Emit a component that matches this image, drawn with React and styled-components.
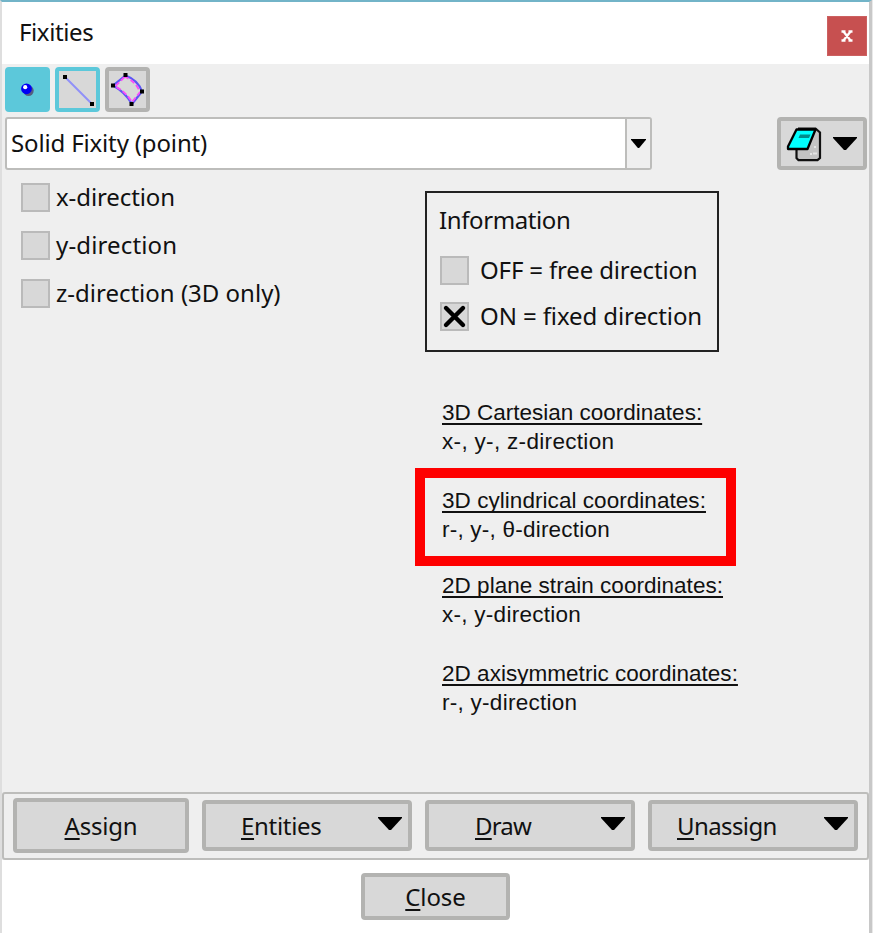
import React from "react";
import styled, { createGlobalStyle } from "styled-components";

const Global = createGlobalStyle`
  * { box-sizing: border-box; }
  body { margin: 0; background: #e9e9e9; overflow: hidden; }
  button { font: inherit; color: inherit; padding: 0; margin: 0; }
`;

const Window = styled.div`
  width: 872px;
  height: 933px;
  display: flex;
  flex-direction: column;
  border-left: 2px solid #dedede;
  border-right: 3px solid #c8c8c8;
  border-top: 2px solid #72b4c8;
  background: #efefef;
  font-family: "Noto Sans", sans-serif;
  font-size: 24px;
  line-height: 32px;
  color: #111;
`;

const TitleBar = styled.header`
  height: 62px;
  flex: none;
  display: flex;
  justify-content: space-between;
  align-items: flex-start;
  padding: 14px 2px 0 17px;
  background: #fff;
`;

const Text = styled.span`
  display: block;
  white-space: pre;
  letter-spacing: ${(p) => p.$track || 0}px;
`;

const CloseX = styled.button`
  width: 40px;
  height: 40px;
  border: 1px solid #cc6060;
  background: #c75050;
  display: grid;
  place-items: center;
`;

const ToolRow = styled.div`
  display: flex;
  flex: none;
  gap: 5px;
  padding: 3px 0 0 2.5px;
  height: 53px;
`;

const Tool = styled.button`
  width: 45px;
  height: 45px;
  border: 4px solid ${(p) => (p.$tone === "plain" ? "#b3b3b1" : "#5cc8da")};
  border-radius: 4px;
  background: ${(p) => (p.$tone === "active" ? "#5cc8da" : "#d8d8d8")};
  display: grid;
  place-items: center;
`;

const SelectRow = styled.div`
  display: flex;
  flex: none;
  justify-content: space-between;
  height: 53px;
  padding: 0 2px 0 3px;
`;

const Combo = styled.div`
  width: 647px;
  height: 53px;
  display: flex;
  border: 2px solid #bdbdbb;
  border-radius: 3px;
  background: #fff;
`;

const ComboValue = styled.div`
  flex: 1;
  padding: 8px 0 0 4px;
`;

const ComboArrow = styled.div`
  width: 25px;
  display: grid;
  place-items: center;
  border-left: 2px solid #bdbdbb;
  background: #efefef;
`;

const Button = styled.button`
  width: ${(p) => p.$w}px;
  height: ${(p) => p.$h}px;
  display: flex;
  align-items: center;
  justify-content: center;
  border: 4px solid #b3b3b1;
  border-radius: 4px;
  background: #d8d8d8;
`;

const BookButton = styled(Button)`
  justify-content: space-between;
  padding: 0 6px 0 5px;
`;

const MenuButton = styled(Button)`
  justify-content: flex-start;
  padding: 0 6px 0 ${(p) => p.$inset}px;
  svg { margin: -4px 0 0 auto; }
`;

const Mnemonic = styled.span`
  text-decoration: underline;
  text-decoration-thickness: 2px;
  text-underline-offset: 3px;
  text-decoration-skip-ink: none;
`;

const Body = styled.main`
  flex: 1;
  display: grid;
  grid-template-columns: 404px 1fr;
  padding-left: 19px;
`;

const Options = styled.div`
  display: flex;
  flex-direction: column;
  gap: 19px;
  padding-top: 13px;
`;

const OptionRow = styled.div`
  display: flex;
  height: 29px;
  align-items: center;
  gap: ${(p) => p.$gap || 6}px;
`;

const OptionText = styled(Text)`
  margin-top: -2px;
`;

const Check = styled.span`
  width: 29px;
  height: 29px;
  flex: none;
  display: grid;
  place-items: center;
  border: 2px solid #bababa;
  background: #d8d8d8;
`;

const Info = styled.section`
  width: 294px;
  height: 161px;
  margin-top: 21px;
  padding: 11px 0 0 13px;
  border: 2px solid #222;
`;

const InfoTitle = styled(Text)`
  margin: 0 0 20px -1px;
`;

const InfoRows = styled.div`
  display: flex;
  flex-direction: column;
  gap: 17px;
`;

const Coordinates = styled.div`
  display: flex;
  flex-direction: column;
  padding-top: 46px;
  font: 22.5px/29px "Liberation Sans", Arial, sans-serif;
`;

const Coordinate = styled.div`
  height: 58px;
  margin: 0 0 ${(p) => p.$after}px 17px;
`;

const MarkedCoordinate = styled.div`
  width: 321px;
  height: 98px;
  margin: 0 0 5px -10px;
  padding: 8px 0 0 17px;
  border: 10px solid #fe0000;
`;

const Heading = styled(Text)`
  text-decoration: underline;
  text-decoration-thickness: 2px;
  text-underline-offset: 3px;
  text-decoration-skip-ink: none;
`;

const ActionBar = styled.footer`
  height: 68px;
  flex: none;
  display: flex;
  align-items: center;
  gap: 13px;
  padding: 0 0 1px 9px;
  border: 2px solid #bdbdbb;
  border-radius: 3px;
`;

const CloseRow = styled.div`
  height: 73px;
  flex: none;
  display: flex;
  justify-content: center;
  padding-top: 13px;
  background: #fff;
`;

const Down = ({ w = 24, h = 13 }) => (
  <svg width={w} height={h} viewBox="0 0 24 13" preserveAspectRatio="none">
    <path d="M0 0H24V1L13 13H11L0 1Z" fill="#000" />
  </svg>
);

const Cross = () => (
  <svg width="25" height="25" viewBox="0 0 25 25">
    <path d="M4 4L21 21M21 4L4 21" stroke="#000" strokeWidth="4.4" strokeLinecap="round" />
  </svg>
);

const SmallCross = () => (
  <svg width="12" height="12" viewBox="0 0 12 12">
    <path d="M0.5 1.5H4.5M7.5 1.5H11.5M0.5 10.5H4.5M7.5 10.5H11.5M2.5 1.5L9.5 10.5M9.5 1.5L2.5 10.5" stroke="#fff" strokeWidth="2.3" fill="none" />
  </svg>
);

const PointIcon = () => (
  <svg width="37" height="37" viewBox="1 1 37 37">
    <circle cx="20.5" cy="20.8" r="5.2" fill="#555e80" />
    <circle cx="18.5" cy="18.8" r="5.4" fill="#0000f5" />
    <circle cx="17.2" cy="17.2" r="2.1" fill="#fff" />
  </svg>
);

const LineIcon = () => (
  <svg width="37" height="37" viewBox="1 1 37 37">
    <path d="M7 7L34 34" stroke="#9090f8" strokeWidth="1.9" />
    <path d="M5 5h4v4H5ZM32 32h4v4h-4Z" fill="#000" />
  </svg>
);

const SurfaceIcon = () => (
  <svg width="37" height="37" viewBox="1 1 37 37">
    <path d="M17.5 5.5Q30 10 34 21.5L24 34Q17 22 5 15.5Z" fill="none" stroke="#5c56f5" strokeWidth="2.2" />
    <path d="M16.5 7L7 16.5Q17 21 24 32L32 22Q28 12 17.5 7Z" fill="none" stroke="#fa4cfa" strokeWidth="1.8" strokeDasharray="5 2.5" />
    <path d="M15.5 3h4v4h-4ZM3 13.5h4v4H3ZM32 19.5h4v4h-4ZM21.5 32h4v4h-4Z" fill="#000" />
  </svg>
);

const BookIcon = () => (
  <svg width="36" height="36" viewBox="0 0 36 36">
    <path d="M13 2.5H29.5L34 6.5V32L31.5 34.2H12.5L10.5 32V22Z" fill="#c3c3c3" stroke="#111" strokeWidth="2.2" />
    <path d="M10.5 3.5H29.5L21.5 23H2V20.5Z" fill="#00ffff" stroke="#000" strokeWidth="2.3" strokeLinejoin="round" />
    <path d="M14 8.5H24.5L23 12H12.5Z" fill="#008b8b" />
    <path d="M28 20h2v2h-2ZM24 27h2v2h-2ZM27 26.5h4v2h-4Z" fill="#e4e4e4" />
  </svg>
);

const directions = [
  { label: "x-direction", track: -0.1 },
  { label: "y-direction", track: 0.15 },
  { label: "z-direction (3D only)", track: 0 },
];

const menus = [
  { key: "E", rest: "ntities", inset: 35, track: -0.3 },
  { key: "D", rest: "raw", inset: 46, track: -0.8 },
  { key: "U", rest: "nassign", inset: 25, track: -0.6 },
];

export default function App() {
  return (
    <Window>
      <Global />
      <TitleBar>
        <Text $track={-0.4}>Fixities</Text>
        <CloseX aria-label="Close window"><SmallCross /></CloseX>
      </TitleBar>
      <ToolRow>
        <Tool $tone="active" aria-label="Point"><PointIcon /></Tool>
        <Tool $tone="outline" aria-label="Line"><LineIcon /></Tool>
        <Tool $tone="plain" aria-label="Surface"><SurfaceIcon /></Tool>
      </ToolRow>
      <SelectRow>
        <Combo>
          <ComboValue><Text $track={-0.15}>Solid Fixity (point)</Text></ComboValue>
          <ComboArrow><Down w={15} h={9} /></ComboArrow>
        </Combo>
        <BookButton $w={90} $h={53} aria-label="Library">
          <BookIcon />
          <Down />
        </BookButton>
      </SelectRow>
      <Body>
        <Options>
          {directions.map((d) => (
            <OptionRow key={d.label}>
              <Check />
              <OptionText $track={d.track}>{d.label}</OptionText>
            </OptionRow>
          ))}
        </Options>
        <div>
          <Info>
            <InfoTitle $track={-0.4}>Information</InfoTitle>
            <InfoRows>
              <OptionRow $gap={11}><Check /><OptionText $track={-0.15}>OFF = free direction</OptionText></OptionRow>
              <OptionRow $gap={11}><Check><Cross /></Check><OptionText $track={-0.1}>ON = fixed direction</OptionText></OptionRow>
            </InfoRows>
          </Info>
          <Coordinates>
            <Coordinate $after={12}>
              <Heading>3D Cartesian coordinates:</Heading>
              <Text $track={0.32}>x-, y-, z-direction</Text>
            </Coordinate>
            <MarkedCoordinate>
              <Heading $track={0.05}>3D cylindrical coordinates:</Heading>
              <Text $track={0.22}>r-, y-, θ-direction</Text>
            </MarkedCoordinate>
            <Coordinate $after={30}>
              <Heading $track={0.03}>2D plane strain coordinates:</Heading>
              <Text $track={0.27}>x-, y-direction</Text>
            </Coordinate>
            <Coordinate $after={0}>
              <Heading $track={0.03}>2D axisymmetric coordinates:</Heading>
              <Text $track={0.27}>r-, y-direction</Text>
            </Coordinate>
          </Coordinates>
        </div>
      </Body>
      <ActionBar>
        <Button $w={176} $h={55}><Text $track={-0.2}><Mnemonic>A</Mnemonic>ssign</Text></Button>
        {menus.map((m) => (
          <MenuButton key={m.key} $w={210} $h={51} $inset={m.inset}>
            <Text $track={m.track}><Mnemonic>{m.key}</Mnemonic>{m.rest}</Text>
            <Down />
          </MenuButton>
        ))}
      </ActionBar>
      <CloseRow>
        <Button $w={149} $h={47}><Text $track={-0.1}><Mnemonic>C</Mnemonic>lose</Text></Button>
      </CloseRow>
    </Window>
  );
}
